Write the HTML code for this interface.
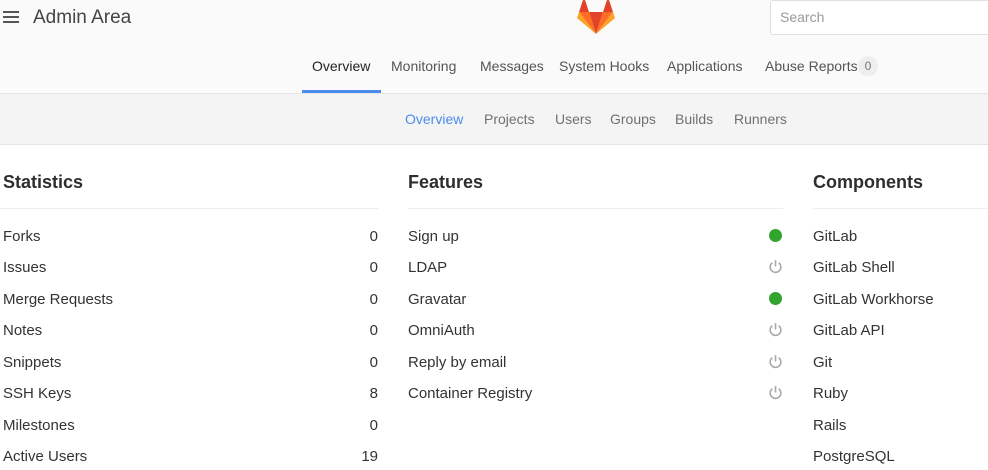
<!DOCTYPE html>
<html><head><style>
body{margin:0;width:988px;height:470px;overflow:hidden;background:#fff;font-family:"Liberation Sans",sans-serif;color:#333;position:relative}
.a{position:absolute;white-space:nowrap}
.hdr{position:absolute;left:0;top:0;width:988px;height:93px;background:#fafafa;border-bottom:1px solid #e5e5e5}
.sub{position:absolute;left:0;top:94px;width:988px;height:50px;background:#f4f4f4;border-bottom:1px solid #e5e5e5}
.nav{font-size:14px;color:#555;top:58px}
.sn{font-size:14px;color:#707070;top:111px}
.h{font-size:18px;font-weight:bold;top:172px;color:#2e2e2e}
.r{font-size:15px;color:#333}
.n{font-size:15px;text-align:right;width:40px}
.dot{position:absolute;width:13px;height:13px;border-radius:50%;background:#31a52e}
.pw{position:absolute;width:15px;height:15px}
</style></head><body>
<div class="hdr"></div>
<div class="sub"></div>
<div class="a" style="left:3px;top:11px;width:16px;height:2px;background:#555;box-shadow:0 5px 0 #555,0 10px 0 #555"></div>
<div class="a" style="left:33px;top:7px;font-size:19px;color:#444">Admin Area</div>
<svg class="a" style="left:577px;top:0" width="38" height="34" viewBox="0 0 38 34">
<polygon points="19,34 12,12 26,12" fill="#e24329"/>
<polygon points="19,34 12,12 2,12" fill="#fc6d26"/>
<polygon points="19,34 26,12 36,12" fill="#fc6d26"/>
<polygon points="2,12 0,18 19,34" fill="#fca326"/>
<polygon points="36,12 38,18 19,34" fill="#fca326"/>
<polygon points="2,12 7,-3 12,12" fill="#e24329"/>
<polygon points="36,12 31,-3 26,12" fill="#e24329"/>
</svg>
<div class="a" style="left:770px;top:0;width:230px;height:33px;background:#fff;border:1px solid #e0e0e0;border-radius:3px"></div>
<div class="a" style="left:780px;top:9px;font-size:14px;color:#999">Search</div>
<div class="a nav" style="left:312px;color:#222">Overview</div>
<div class="a" style="left:302px;top:90px;width:79px;height:3px;background:#4a8bee"></div>
<div class="a nav" style="left:391px">Monitoring</div>
<div class="a nav" style="left:480px">Messages</div>
<div class="a nav" style="left:559px">System Hooks</div>
<div class="a nav" style="left:667px">Applications</div>
<div class="a nav" style="left:765px">Abuse Reports</div>
<div class="a" style="left:858px;top:56px;width:20px;height:20px;border-radius:10px;background:#eee;font-size:12px;color:#777;text-align:center;line-height:20px">0</div>
<div class="a sn" style="left:405px;color:#4a8bee">Overview</div>
<div class="a sn" style="left:484px">Projects</div>
<div class="a sn" style="left:555px">Users</div>
<div class="a sn" style="left:610px">Groups</div>
<div class="a sn" style="left:675px">Builds</div>
<div class="a sn" style="left:734px">Runners</div>
<div class="a h" style="left:3px">Statistics</div>
<div class="a h" style="left:408px">Features</div>
<div class="a h" style="left:813px">Components</div>
<div class="a" style="left:0;top:208px;width:378px;height:1px;background:#eee"></div>
<div class="a" style="left:408px;top:208px;width:375px;height:1px;background:#eee"></div>
<div class="a" style="left:813px;top:208px;width:175px;height:1px;background:#eee"></div>

<div class="a r" style="left:3px;top:228px">Forks</div><div class="a n" style="left:338px;top:228px">0</div>
<div class="a r" style="left:3px;top:259px">Issues</div><div class="a n" style="left:338px;top:259px">0</div>
<div class="a r" style="left:3px;top:291px">Merge Requests</div><div class="a n" style="left:338px;top:291px">0</div>
<div class="a r" style="left:3px;top:322px">Notes</div><div class="a n" style="left:338px;top:322px">0</div>
<div class="a r" style="left:3px;top:354px">Snippets</div><div class="a n" style="left:338px;top:354px">0</div>
<div class="a r" style="left:3px;top:385px">SSH Keys</div><div class="a n" style="left:338px;top:385px">8</div>
<div class="a r" style="left:3px;top:417px">Milestones</div><div class="a n" style="left:338px;top:417px">0</div>
<div class="a r" style="left:3px;top:448px">Active Users</div><div class="a n" style="left:338px;top:448px">19</div>

<div class="a r" style="left:408px;top:228px">Sign up</div>
<div class="a r" style="left:408px;top:259px">LDAP</div>
<div class="a r" style="left:408px;top:291px">Gravatar</div>
<div class="a r" style="left:408px;top:322px">OmniAuth</div>
<div class="a r" style="left:408px;top:354px">Reply by email</div>
<div class="a r" style="left:408px;top:385px">Container Registry</div>

<div class="dot" style="left:769px;top:229px"></div>
<svg class="pw" style="left:768px;top:259px" viewBox="0 0 14 14"><path d="M4 3.5A5 5 0 1 0 10 3.5M7 1V7" fill="none" stroke="#aaa" stroke-width="1.5"/></svg>
<div class="dot" style="left:769px;top:292px"></div>
<svg class="pw" style="left:768px;top:322px" viewBox="0 0 14 14"><path d="M4 3.5A5 5 0 1 0 10 3.5M7 1V7" fill="none" stroke="#aaa" stroke-width="1.5"/></svg>
<svg class="pw" style="left:768px;top:354px" viewBox="0 0 14 14"><path d="M4 3.5A5 5 0 1 0 10 3.5M7 1V7" fill="none" stroke="#aaa" stroke-width="1.5"/></svg>
<svg class="pw" style="left:768px;top:385px" viewBox="0 0 14 14"><path d="M4 3.5A5 5 0 1 0 10 3.5M7 1V7" fill="none" stroke="#aaa" stroke-width="1.5"/></svg>

<div class="a r" style="left:813px;top:228px">GitLab</div>
<div class="a r" style="left:813px;top:259px">GitLab Shell</div>
<div class="a r" style="left:813px;top:291px">GitLab Workhorse</div>
<div class="a r" style="left:813px;top:322px">GitLab API</div>
<div class="a r" style="left:813px;top:354px">Git</div>
<div class="a r" style="left:813px;top:385px">Ruby</div>
<div class="a r" style="left:813px;top:417px">Rails</div>
<div class="a r" style="left:813px;top:448px">PostgreSQL</div>
</body></html>
